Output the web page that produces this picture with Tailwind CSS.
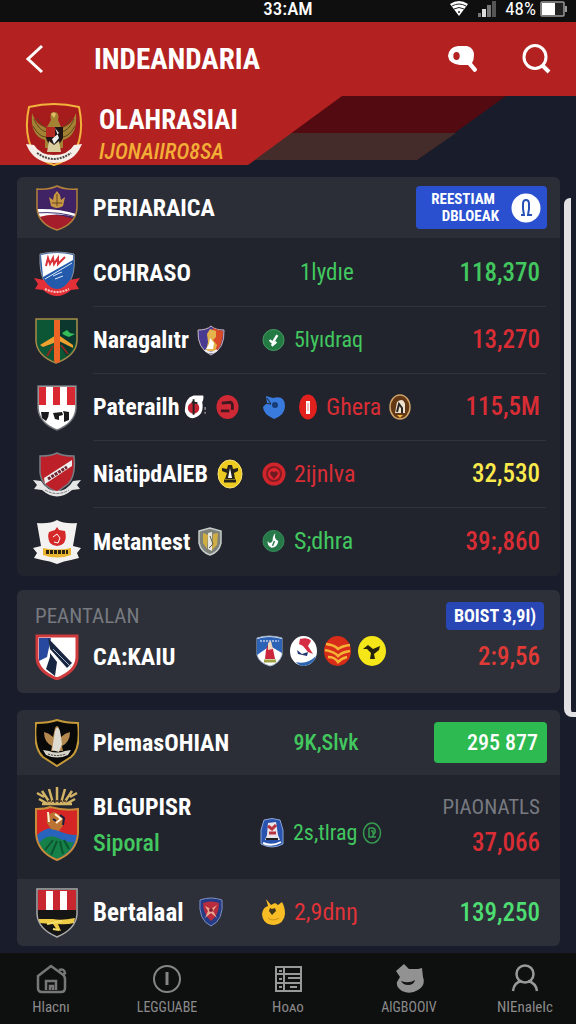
<!DOCTYPE html>
<html lang="id">
<head>
<meta charset="utf-8">
<meta name="viewport" content="width=device-width, initial-scale=1">
<title>Indeandaria</title>
<script src="https://cdn.jsdelivr.net/npm/@tailwindcss/browser@4"></script>
</head>
<body class="min-h-screen bg-[#181c2b] font-['Roboto_Condensed','Liberation_Sans_Narrow','Roboto',sans-serif] text-white">
<div class="flex min-h-screen flex-col">

<!-- Status bar -->
<div class="grid h-[22px] grid-cols-3 items-start bg-[#0f0f0f] text-[19px] leading-[18px]">
  <span></span>
  <span class="text-center font-medium">33:AM</span>
  <span class="flex items-center justify-end gap-2 pr-2">
    <svg class="h-4 w-5" viewBox="0 0 20 16" fill="none"><path d="M1 3Q10-3 19 3L10 15Z" fill="#fff"/><path d="M3 5q7-4 14 0M5 8q5-3 10 0" stroke="#222"/><circle cx="10" cy="11" r="1" fill="#222"/></svg>
    <svg class="h-4 w-5" viewBox="0 0 20 16"><path d="M1 12h3v4H1z" fill="#777"/><path d="M5 8h4v8H5z" fill="#ddd"/><path d="M10 4h4v12h-4z" fill="#777"/><path d="M15 0h4v16h-4z" fill="#555"/></svg>
    <span>48%</span>
    <svg class="-ml-1 h-4 w-7" viewBox="0 0 28 16"><rect x="1" y="1" width="23" height="14" rx="1" fill="#222" stroke="#999" stroke-width="1.5"/><path d="M2 2h13v12H2z" fill="#fff"/><path d="M25 5h2v6h-2z" fill="#999"/></svg>
  </span>
</div>

<!-- App bar -->
<header class="flex h-[74px] items-center bg-[#b32221] pr-6 pl-6">
  <button type="button" aria-label="Kembali" class="w-[70px]"><svg class="h-8 w-6" viewBox="0 0 24 32" fill="none" stroke="#fff" stroke-width="3"><path d="M18 3L4 16l14 13"/></svg></button>
  <h1 class="flex-1 text-[29px] leading-8 font-bold">INDEANDARIA</h1>
  <button type="button" aria-label="Temukan" class="mr-[42px]"><svg class="h-8 w-8" viewBox="0 0 32 32"><path d="M12 3h9q7 2 7 9 0 5-2 8l5 6q0 3-3 3l-6-7h-8q-11-1-12-9 1-9 10-10Z" fill="#fff"/><ellipse cx="10.500" cy="13" rx="3.200" ry="4" fill="#b32221"/></svg></button>
  <button type="button" aria-label="Cari"><svg class="h-8 w-8" viewBox="0 0 32 32" fill="none" stroke="#fff" stroke-width="3"><ellipse cx="15" cy="14" rx="11" ry="11.500"/><path d="M22 22l7 7" stroke-width="4"/></svg></button>
</header>

<!-- League banner -->
<section class="relative h-[69px] bg-[#181c2b]">
  <svg class="absolute inset-0 h-full w-full" viewBox="0 0 576 69" preserveAspectRatio="none"><path d="M0 0H506L417 64H250Z" fill="#540a11"/><path d="M280 37H456L417 64H240Z" fill="#442c2b"/><path d="M0 0H342L248 69H0Z" fill="#b32221"/></svg>
  <div class="relative flex items-center pl-[25px]">
    <svg class="mt-1 h-16 w-[58px] shrink-0" viewBox="0 0 58 64"><path d="M4 5Q29-1 54 5Q60 32 49 51Q40 60 29 63Q18 60 9 51Q-2 32 4 5Z" fill="#a61c1c" stroke="#f2b23c" stroke-width="2"/><path d="M7 11Q5 34 20 38L20 46H38L38 38Q53 34 51 11Q46 25 36 25L33 18Q35 10 29 10Q24 10 26 18L22 25Q12 25 7 11Z" fill="#a38234"/><path d="M9 17q5 12 13 13M8 24q6 11 13 11M12 16q4 8 9 10M49 17q-5 12-13 13M50 24q-6 11-13 11M46 16q-4 8-9 10" stroke="#5f4520" fill="none"/><path d="M26 12q3-3 5 0l-2 4z" fill="#e0bf66"/><path d="M21 25h17v11q-3 7-9 9-6-2-8-9Z" fill="#201514"/><path d="M21 25h9v10h-9z" fill="#b42a22"/><path d="M30 26l4 5-7 6 2 5 5-6z" fill="#eee"/><path d="M24 39l5 4 5-4 2 11H22z" fill="#d9cd9d"/><path d="M1 42l8 1q6 10 20 10t20-10l8-1-3 6q-8 13-25 13T4 48Z" fill="#f5efe8"/><path d="M12 51q17 12 34 0" fill="none" stroke="#4b4644" stroke-dasharray="2 1" stroke-width="2"/></svg>
    <div class="pl-4 pt-2">
      <h2 class="text-[27px] leading-8 font-bold">OLAHRASIAI</h2>
      <p class="text-[22px] leading-8 font-medium text-[#f2ae36] italic">IJONAIIRO8SA</p>
    </div>
  </div>
</section>

<main class="relative flex flex-1 flex-col gap-[17px] pt-3 pr-4 pb-[7px] pl-[17px]">
  <!-- Scroll track -->
  <div class="absolute top-[33px] right-0 h-[519px] w-3 rounded-tl-md rounded-bl-lg border-b-[5px] border-l-[7px] border-[#e2e2e4]"></div>

  <section class="overflow-hidden rounded-md bg-[#21242d] pb-px text-2xl">
    <div class="flex h-[61px] items-center bg-[#2b2e36] pr-[13px] pl-[18px]">
      <svg class="mr-[14px] h-[46px] w-11 shrink-0" viewBox="0 0 44 46"><defs><clipPath id="a"><path d="M2 4Q14 5 22 1Q30 5 42 4V23Q41 39 22 45Q3 39 2 23Z"/></clipPath></defs><g clip-path="url(#a)"><path d="M0 0h44v46H0z" fill="#402364"/><path d="M0 31q22-4 44 5v10H0z" fill="#a51d2b"/><path d="M0 24q25-1 44 6v3Q22 26 0 33z" fill="#fff"/><path d="M0 28q25-2 44 5" stroke="#443071" fill="none"/></g><path d="M14 12l4 3 1-5 3-4 3 4 1 5 4-3-2 9q-6 4-12 0Z" fill="#c79843"/><path d="M17 18h10M22 9v12" stroke="#674225"/><path d="M2 4Q14 5 22 1Q30 5 42 4V23Q41 39 22 45Q3 39 2 23Z" fill="none" stroke="#b3823c" stroke-width="1.500"/></svg>
      <h3 class="flex-1 font-bold">PERIARAICA</h3>
      <button type="button" class="flex h-[43px] w-[131px] items-center justify-end gap-3 rounded bg-[#2a50d0] pr-[6px] text-[15px] leading-[17px] font-bold"><span class="flex flex-col items-end"><span class="block pr-1">REESTIAM</span><span class="block">DBLOEAK</span></span><svg class="h-[30px] w-[30px]" viewBox="0 0 30 30"><circle cx="15" cy="15" r="14.500" fill="#fff"/><path d="M10 22h3l-1-6v-5q0-4 3-4t3 4v5l-1 6h4" fill="none" stroke="#2650b5" stroke-width="2"/></svg></button>
    </div>
    <ul class="pt-[2px]">
      <li class="flex h-[67px] pr-[14px] pl-[18px]">
        <div class="flex w-[58px] shrink-0 items-center"><svg class="-ml-[2px] h-[46px] w-12" viewBox="-2 0 48 46"><path d="M5 3Q22-1 39 3Q41 24 33 33Q27 39 22 42Q14 38 10 32Q4 22 5 3Z" fill="#245aac" stroke="#8b929c"/><path d="M6 4q16-4 32 0v5L8 26Z" fill="#fff"/><path d="M11 15l2-8 2 6 3-6 1 6 4-6v6l5-5M27 9l3-3" fill="none" stroke="#db3138" stroke-width="2"/><path d="M10 28L37 12M18 25l9-4M20 28l8-3" stroke="#dceafa"/><path d="M-1 27l10 2q6 9 13 9t13-9l10-2-4 6 3 5-8 1q-14 12-28 0l-8-1 3-5Z" fill="#e33038"/><path d="M10 38q12 6 24 0" fill="none" stroke="#fac5bc" stroke-width="2" stroke-dasharray="2 1"/></svg></div>
        <div class="grid flex-1 grid-cols-[169fr_278fr] items-center border-b border-[#30333b] pr-[6px]"><h3 class="font-bold">COHRASO</h3><div class="flex items-center justify-between text-[#42c85f]"><span class="pl-[38px] text-[23px]">1lydıe</span><span class="text-[25px] font-medium">118,370</span></div></div>
      </li>
      <li class="flex h-[67px] pr-[14px] pl-[18px]">
        <div class="flex w-[58px] shrink-0 items-center"><svg class="h-[46px] w-11" viewBox="0 0 44 46"><path d="M1 1h41v22q-1 15-21 22Q2 38 1 23Z" fill="#0d5635" stroke="#a88a48" stroke-width="1.500"/><path d="M23 2h18v20q-3 12-10 16L24 25z" fill="#0b372e"/><path d="M5 27l13-8 4-3 16 11v3l-14-7-16 6z" fill="#eea12f"/><path d="M19 2h6v42l-4 1-2-2z" fill="#ee6424"/><path d="M27 15l5-3 3 3 5 1-6 3-5-2z" fill="#35bd57"/><path d="M12 38l6-10M33 36l-7-9" stroke="#8a2b22" stroke-width="2"/></svg></div>
        <div class="grid flex-1 grid-cols-[169fr_278fr] items-center border-b border-[#30333b] pr-[6px]"><div class="flex items-center gap-2"><h3 class="font-bold">Naragalıtr</h3><svg class="h-[31px] w-7" viewBox="0 0 28 31"><path d="M1 5Q10 5 14 1Q18 5 27 5Q28 24 14 30Q0 24 1 5Z" fill="#493b92" stroke="#c9b8bd"/><path d="M16 3q5 2 10 3 0 17-10 22z" fill="#d94a27"/><path d="M10 9l3-5 6 2v6l-3 3 4 5-2 6h-9l2-9z" fill="#e4b34c"/><path d="M13 13l4 5-1 6H9l3-5z" fill="#fff"/><path d="M8 25q6 5 12 0" stroke="#eee" fill="none" stroke-width="2"/></svg></div><div class="flex items-center justify-between text-[#42c85f]"><span class="flex items-center gap-[9px]"><svg class="h-6 w-[23px]" viewBox="0 0 24 24"><circle cx="12" cy="12" r="11" fill="#237b43" stroke="#489f61"/><path d="M8 12l3 3 5-8M10 18l5-4" fill="none" stroke="#fff" stroke-width="2.500"/></svg><span class="text-[22px]">5lyıdraq</span></span><span class="text-[25px] font-medium text-[#d92d35]">13,270</span></div></div>
      </li>
      <li class="flex h-[67px] pr-[14px] pl-[18px]">
        <div class="flex w-[58px] shrink-0 items-center"><svg class="h-[46px] w-11" viewBox="0 0 44 46"><path d="M3 1h38v22q-1 15-19 22Q4 38 3 23Z" fill="#fff" stroke="#74777c" stroke-width="1.500"/><path d="M4 2h7v18H4zM18 2h7v18h-7zM32 2h8v18h-8z" fill="#d92831"/><path d="M6 27h8q0 5-3 9l-4-3zM18 28l9-1 1 3-4 1v4l-4-1zM28 26l6 1v8l-5 2v-8z" fill="#1a1a1d"/></svg></div>
        <div class="grid flex-1 grid-cols-[169fr_278fr] items-center border-b border-[#30333b] pr-[6px]"><div class="flex items-center gap-[5px]"><h3 class="font-bold">Paterailh</h3><svg class="mr-1 h-[26px] w-[23px]" viewBox="0 0 24 26"><path d="M10 1h10q1 3-1 7 2 11-5 15Q5 28 1 18 0 4 10 1Z" fill="#fff"/><circle cx="10" cy="14" r="6" fill="#c22231"/><path d="M10 5v16M8 8l6 1" stroke="#222" stroke-width="2"/><path d="M22 13v3M22 18v2" stroke="#ccc"/></svg><svg class="h-[26px] w-[23px]" viewBox="0 0 24 26"><ellipse cx="12" cy="13" rx="11.500" ry="12.500" fill="#cf2935"/><path d="M6 9l9-1q3 1 2 8M5 17h9" fill="none" stroke="#401820" stroke-width="3"/></svg></div><div class="flex items-center justify-between text-[#d92d35]"><span class="flex items-center gap-[10px]"><svg class="mr-1 h-[26px] w-6" viewBox="0 0 24 26"><path d="M4 2l7 2q12-3 12 8 0 9-11 13Q1 20 1 13L5 9Z" fill="#397bdd"/><path d="M1 6q4 5 8 4L5 4" stroke="#21242d" fill="none"/><circle cx="13" cy="11" r="3" fill="#183d76"/></svg><svg class="-ml-[2px] h-[26px] w-5" viewBox="0 0 20 26"><ellipse cx="10" cy="13" rx="9" ry="12.500" fill="#e0211e"/><path d="M8 7h4v13H8z" fill="#fff"/><path d="M10 9v8" stroke="#e88"/></svg><span class="-ml-[2px]">Ghera</span><svg class="-ml-[2px] h-[26px] w-[22px]" viewBox="0 0 22 26"><ellipse cx="11" cy="13" rx="10" ry="12" fill="#633815" stroke="#cda36d" stroke-width="1.500"/><path d="M8 8q6-5 8 2v9H6z" fill="#eee1ce"/><path d="M8 18l2-8 3 4v5" fill="none" stroke="#292522" stroke-width="2"/><path d="M8 21l3 3 3-3" fill="#efb243"/></svg></span><span class="text-[25px] font-medium">115,5M</span></div></div>
      </li>
      <li class="flex h-[67px] pr-[14px] pl-[18px]">
        <div class="flex w-[58px] shrink-0 items-center"><svg class="-ml-[2px] h-[46px] w-12" viewBox="0 0 48 46"><path d="M7 4Q19 4 24 1Q29 4 41 4Q43 24 35 32L24 40Q8 34 7 20Z" fill="#bd2029" stroke="#777c82" stroke-width="1.500"/><path d="M11 26L39 8v6L12 32z" fill="#eee"/><path d="M15 27l19-12" stroke="#6c2430" stroke-width="3" stroke-dasharray="3 1"/><path d="M0 28l8 1q6 10 16 10t16-10l8-1-4 5 3 4-8 1q-15 13-30 0l-8-1 3-4Z" fill="#e5e5e5"/><path d="M12 38q12 7 24 0" fill="none" stroke="#777" stroke-dasharray="3 1"/></svg></div>
        <div class="grid flex-1 grid-cols-[169fr_278fr] items-center border-b border-[#30333b] pr-[6px]"><div class="flex items-center gap-[9px]"><h3 class="font-bold">NiatipdAlEB</h3><svg class="h-[30px] w-[26px]" viewBox="0 0 26 30"><ellipse cx="13" cy="15" rx="12" ry="14" fill="#eecb20" stroke="#fae275"/><path d="M5 9l5 1 1-4h4l1 4 5-1v3l-4 2 1 6H8l2-6-5-2Z" fill="#25231b"/><path d="M13 9l2 10h-4z" fill="#fff"/><path d="M7 22h12" stroke="#25231b" stroke-width="3"/></svg></div><div class="flex items-center justify-between text-[#d92d35]"><span class="flex items-center gap-[8px]"><svg class="h-6 w-6" viewBox="0 0 24 24"><circle cx="12" cy="12" r="11.500" fill="#d0252b"/><circle cx="12" cy="12" r="7" fill="#df252d" stroke="#811b22" stroke-width="2"/><path d="M12 17L8 12q0-4 4-2 4-2 4 2Z" fill="#701b22"/></svg>2ijnlva</span><span class="text-[25px] font-medium text-[#fbea4b]">32,530</span></div></div>
      </li>
      <li class="flex h-[67px] pr-[14px] pl-[18px]">
        <div class="flex w-[58px] shrink-0 items-center"><svg class="-ml-[2px] h-[46px] w-12" viewBox="0 0 48 46"><path d="M4 4Q17 5 24 1Q31 5 44 4L40 27l8 2-4 5 2 5-8 2Q31 42 24 45 17 42 9 41l-8-2 3-5-4-5 8-2Z" fill="#f4f2f0"/><path d="M24 8l2 3 6 1q2 7-1 12-3 3-7 3t-7-3q-3-6-1-11l6-2Z" fill="#d42829"/><path d="M20 18l4-3 3 4-2 5-4-1" stroke="#fff" fill="none"/><path d="M10 29q14 3 28 0v7q-14 5-28 0Z" fill="#e9b52e"/><path d="M13 33h22" stroke="#2a2313" stroke-width="4" stroke-dasharray="3 1"/></svg></div>
        <div class="grid flex-1 grid-cols-[169fr_278fr] items-center pr-[6px]"><div class="flex items-center gap-2"><h3 class="font-bold">Metantest</h3><svg class="h-[29px] w-6" viewBox="0 0 24 29"><path d="M1 4l11-3 11 3v12q-2 9-11 12Q3 25 1 16Z" fill="#7d8178" stroke="#c5cbc9" stroke-width="1.500"/><path d="M5 6l5 2-1 14-4-6zM15 7l5-1-1 12-5 5z" fill="#d1ae43"/><path d="M10 6l4-1v19l-4-2z" fill="#e6e6dc"/><path d="M12 9l3 8-4 4" fill="none" stroke="#54584d"/></svg></div><div class="flex items-center justify-between text-[#42c85f]"><span class="flex items-center gap-[9px]"><svg class="h-6 w-[23px]" viewBox="0 0 24 24"><circle cx="12" cy="12" r="11" fill="#27794a" stroke="#398e5a"/><path d="M14 4q-2 6 3 8-1 7-7 7-5-2-4-7 2 4 5 0 0-6 3-8Z" fill="#fff"/><path d="M11 17l2-5" stroke="#27794a" stroke-width="1.500"/></svg>S;dhra</span><span class="text-[25px] font-medium text-[#d92d35]">39:,860</span></div></div>
      </li>
    </ul>
  </section>

  <section class="-mt-[3px] h-[103px] rounded-md bg-[#2d3038] pr-4 pl-[18px]">
    <div class="flex h-[42px] items-end justify-between"><h3 class="text-[21px] leading-8 text-[#777a80]">PEANTALAN</h3><button type="button" class="mb-[2px] h-7 w-[98px] rounded bg-[#2846b4] text-lg leading-7 font-bold">BOIST 3,9I)</button></div>
    <div class="flex h-[50px] items-center pr-1">
      <svg class="mr-[14px] h-[46px] w-11 shrink-0" viewBox="0 0 44 46"><path d="M2 2h40v21q0 14-20 22Q2 37 2 23Z" fill="#fff"/><path d="M4 4h12l-4 19-8 4z" fill="#274aa0"/><path d="M13 4L37 29l-5 5L15 15z" fill="#182642"/><path d="M15 19l7 9-2 14-9-7 4-12z" fill="#182642"/><path d="M18 15l18 18" stroke="#aab3c0"/><path d="M2 2h40v21q0 14-20 22Q2 37 2 23Z" fill="none" stroke="#cf3a3d" stroke-width="3"/></svg>
      <div class="grid flex-1 grid-cols-[163fr_284fr] items-center text-2xl"><h3 class="font-bold">CA:KAIU</h3><div class="flex items-center justify-between"><span class="-mt-3 flex gap-[7px]">
        <svg class="h-8 w-[27px]" viewBox="0 0 27 32"><path d="M1 3q12-4 25 0v17q-3 9-12 11Q3 28 1 20Z" fill="#fff" stroke="#9eb0cc"/><path d="M1 4q12-4 25 0v14L14 11 1 20Z" fill="#2d63b6"/><path d="M4 6h19" stroke="#fff" stroke-dasharray="2 1"/><path d="M13 7l4 7 2 10H9l1-9Z" fill="#cb263b"/><path d="M12 8l3-2 2 8-5 1z" fill="#f0d5bd"/><path d="M8 26h12" stroke="#9da142" stroke-width="3"/></svg>
        <svg class="h-8 w-[27px]" viewBox="0 0 27 32"><ellipse cx="13.500" cy="16" rx="13.500" ry="15" fill="#fff"/><path d="M6 27q11 3 20-6-2 8-12 10-5 0-8-4Z" fill="#2d64b2"/><path d="M10 4q8-2 11 2l-3 5 5 8-5-2-5-6-4-2Z" fill="#d52c43"/><path d="M7 15l5 4 6-2-1 4-9-2Z" fill="#23356f"/></svg>
        <svg class="h-8 w-[27px]" viewBox="0 0 27 32"><ellipse cx="13.500" cy="16" rx="13.500" ry="15" fill="#d62c18"/><path d="M2 9q9 1 12 5 4-3 12-4M1 15q10 2 13 6 4-4 12-5M4 22q7 0 10 5 4-4 9-5" fill="none" stroke="#f4b335" stroke-width="2.500"/></svg>
        <svg class="h-8 w-7" viewBox="0 0 28 32"><ellipse cx="14" cy="16" rx="14" ry="15" fill="#f5e619"/><path d="M5 14l5-4 5 4 7-3-1 4-5 4 1 5h-5l1-6-4-4Z" fill="#25230d"/></svg></span><span class="text-[25px] font-medium text-[#df3a36]">2:9,56</span></div></div>
    </div>
  </section>

  <section class="overflow-hidden rounded-md bg-[#21242d] text-2xl">
    <div class="flex h-[65px] items-center bg-[#2b2e36] pr-[13px] pl-[18px]">
      <svg class="mr-[14px] h-12 w-11 shrink-0" viewBox="0 0 44 48"><path d="M1 4Q14 4 22 1Q30 4 43 4Q46 30 36 38L22 47 8 38Q-2 29 1 4Z" fill="#090909" stroke="#c69a37" stroke-width="2"/><path d="M9 13q5 1 9 5l2-9q2-4 4 0l2 9q4-4 9-5 0 10-8 14l1 5H16l1-5Q9 23 9 13Z" fill="#b4884f"/><path d="M20 12q2-7 5 0l2 13-3 8-7-2z" fill="#dedbd2"/><path d="M8 31l6 1q8 3 16 0l6-1-3 5q-11 5-22 0Z" fill="#d5d2c8"/><path d="M13 35q9 3 18 0" fill="none" stroke="#45413b" stroke-dasharray="2 1"/></svg>
      <div class="grid flex-1 grid-cols-[201fr_254fr] items-center"><h3 class="font-bold">PlemasOHIAN</h3><div class="flex items-center justify-between"><span class="text-[22px] font-medium text-[#42c85f]">9K,Slvk</span><button type="button" class="h-[41px] w-[113px] rounded bg-[#2dba51] pr-[9px] text-right text-[22px] font-medium">295 877</button></div></div>
    </div>
    <ul>
      <li class="flex h-[104px] pr-5 pl-[18px]">
        <div class="flex w-[58px] shrink-0 items-center"><svg class="-mt-2 h-[78px] w-11" viewBox="0 0 44 78"><g fill="none" stroke="#d2b365" stroke-width="2.500"><path d="M22 3v16M14 5l4 14M30 5l-4 14M7 7l8 12M37 7l-8 12M2 9l7 4M42 9l-7 4M4 15l9 5M40 15l-9 5M7 20h30"/></g><path d="M13 17h18" stroke="#63472b" stroke-width="2" stroke-dasharray="2 2"/><path d="M1 25Q11 25 15 23Q30 27 43 25V49Q42 68 22 76Q2 68 1 49Z" fill="#d52524"/><path d="M2 51q11-10 20-5t20 5q-1 18-20 24Q3 68 2 51Z" fill="#2864bc"/><path d="M4 59q9-10 19-5t16 4q-4 12-17 17Q8 70 4 59Z" fill="#158048"/><path d="M10 66l8-10M16 71l6-14M28 70l-3-13M34 65l-5-9" stroke="#0c5530" stroke-width="2"/><path d="M12 31l7-3 8 4 2 8-5 7-8-2-4-6Z" fill="#bd7332"/><path d="M13 28l1 10M20 30l6 5-5 4" stroke="#fff0d6" stroke-width="2" fill="none"/><path d="M25 31l4 3-1 7M18 35l3 2" stroke="#181f3c" stroke-width="2" fill="none"/><path d="M1 25Q11 25 15 23Q30 27 43 25V49Q42 68 22 76Q2 68 1 49Z" fill="none" stroke="#c88b3a" stroke-width="2"/></svg></div>
        <div class="grid flex-1 grid-cols-[167fr_280fr] items-center"><div class="-mt-1 leading-9"><h3 class="font-bold">BLGUPISR</h3><p class="font-medium text-[#42c85f]">Siporal</p></div><div class="flex items-center justify-between"><span class="mt-3 flex items-center gap-[9px] text-[#42c85f]"><svg class="h-[30px] w-6" viewBox="0 0 24 30"><path d="M4 2q8-3 16 0l3 10v14q-11 6-22 0V12Z" fill="#2853af" stroke="#8ba5d5"/><path d="M8 5l8-1 2 13 2 5H5l2-5Z" fill="#e8e4ea"/><path d="M8 8l4 3 4-4M9 15h7" fill="none" stroke="#b9333e" stroke-width="3"/><path d="M6 21h12" stroke="#222" stroke-width="2"/><path d="M3 25q9 4 18-1" stroke="#fff" stroke-width="2" fill="none"/></svg><span class="text-[22px]">2s,tlrag</span><svg class="-ml-1 h-[22px] w-5" viewBox="0 0 20 22" fill="none" stroke="#359c50" stroke-width="1.500"><ellipse cx="10" cy="11" rx="8.500" ry="10"/><path d="M7 6h4q4 2 1 6l-2 3h4M7 6v9h3M9 9h2v3"/></svg></span><div class="-mt-1 text-right leading-9"><p class="text-[21px] text-[#777a80]">PIAONATLS</p><p class="text-[25px] font-medium text-[#d92d35]">37,066</p></div></div></div>
      </li>
      <li class="flex h-[67px] bg-[#2d3038] pr-5 pl-[18px]">
        <div class="flex w-[58px] shrink-0 items-center"><svg class="h-[50px] w-11" viewBox="0 0 44 50"><path d="M2 1h40v25q-1 15-20 23Q3 41 2 26Z" fill="#151515"/><path d="M3 2h38v20H3z" fill="#c92730"/><path d="M11 3h7v19h-7zM25 3h7v19h-7z" fill="#fff"/><path d="M4 31h14q8 2 22-1l-1 5q-8 2-16 1l3 7-4-1-4-6-14-1z" fill="#edcb44"/><path d="M12 36l15-3M18 41l6 1" stroke="#f5df68" stroke-width="2"/><path d="M2 1h40v25q-1 15-20 23Q3 41 2 26Z" fill="none" stroke="#aaa" stroke-width="1.500"/></svg></div>
        <div class="grid flex-1 grid-cols-[169fr_278fr] items-center"><div class="flex items-center gap-[16px]"><h3 class="text-[25px] font-bold">Bertalaal</h3><svg class="h-[30px] w-6" viewBox="0 0 24 30"><path d="M1 3q11-4 22 0 2 20-11 26Q-1 23 1 3Z" fill="#263b85" stroke="#7e92c0"/><path d="M4 6q8-3 16 0 0 12-8 18Q4 17 4 6Z" fill="#b82c3e"/><path d="M6 9l6 3 6-4-4 6 4 7-6-5-6 5 3-7Z" fill="#e9aa91"/><circle cx="12" cy="13" r="2" fill="#892335"/></svg></div><div class="flex items-center justify-between"><span class="flex items-center gap-[9px] text-[#df3338]"><svg class="h-[26px] w-[23px]" viewBox="0 0 23 26"><path d="M4 0l5 6 4-2 3 2 4-3q3 5 3 12-1 10-11 11Q1 26 0 15 1 8 6 7Z" fill="#f8bd25"/><path d="M10 16l-3-4 1-3 2 1 3-1 1 3Z" fill="#40361e"/><path d="M6 19q5 4 11 0" stroke="#cc901a" fill="none"/></svg>2,9dnŋ</span><span class="text-[25px] font-medium text-[#4ddd72]">139,250</span></div></div>
      </li>
    </ul>
  </section>
</main>

<!-- Bottom navigation -->
<nav class="grid h-[71px] grid-cols-[102fr_130fr_112fr_130fr_102fr] bg-[#0e0f0f] text-[15px] leading-5 text-[#8b8b8b]">
  <a href="#" class="flex flex-col items-center gap-[2px] pt-[10px]"><svg class="h-8 w-8" viewBox="0 0 32 32" fill="none" stroke="#777" stroke-width="2.500"><path d="M3 13L16 3l11 8q3 2 3 5v9q0 4-4 4H7q-4 0-4-4Z"/><path d="M24 7q5-2 6 3l-2 2M11 27v-9h10v9M15 27v-4h3v4"/></svg>Hlacnı</a>
  <a href="#" class="flex flex-col items-center gap-[2px] pt-[10px]"><svg class="h-8 w-8" viewBox="0 0 32 32" fill="none" stroke="#858585" stroke-width="2"><circle cx="16" cy="16" r="13"/><path d="M16 9v13" stroke-width="3"/></svg><span class="text-sm leading-5">LEGGUABE</span></a>
  <a href="#" class="flex flex-col items-center gap-[2px] pt-[10px]"><svg class="h-8 w-8" viewBox="0 0 32 32" fill="none" stroke="#999" stroke-width="2"><path d="M4 4h25v24H4zM12 4v24M4 11h25M4 20h25M16 15h13M7 8h3M7 16h3M7 24h3M18 24h7"/></svg>Hoᴀo</a>
  <a href="#" class="flex flex-col items-center gap-[2px] pt-[10px]"><svg class="h-8 w-8" viewBox="0 0 32 32"><path d="M11 1l5 5h9l4-1 1 9q3 8-5 13-8 5-16 1-6-4-5-9l3-5-4-6Z" fill="#929292"/><path d="M8 18q8 3 14-1-1 5-7 5-5 0-7-4Z" fill="#151515"/></svg><span class="text-sm leading-5">AlGBOOIV</span></a>
  <a href="#" class="flex flex-col items-center gap-[2px] pt-[10px]"><svg class="h-8 w-8" viewBox="0 0 32 32" fill="none" stroke="#999" stroke-width="2.500"><circle cx="16" cy="11" r="8.500"/><path d="M4 28q1-9 9-10M19 18q8 2 9 10"/></svg>NIEnaleIc</a>
</nav>
</div>
</body>
</html>
